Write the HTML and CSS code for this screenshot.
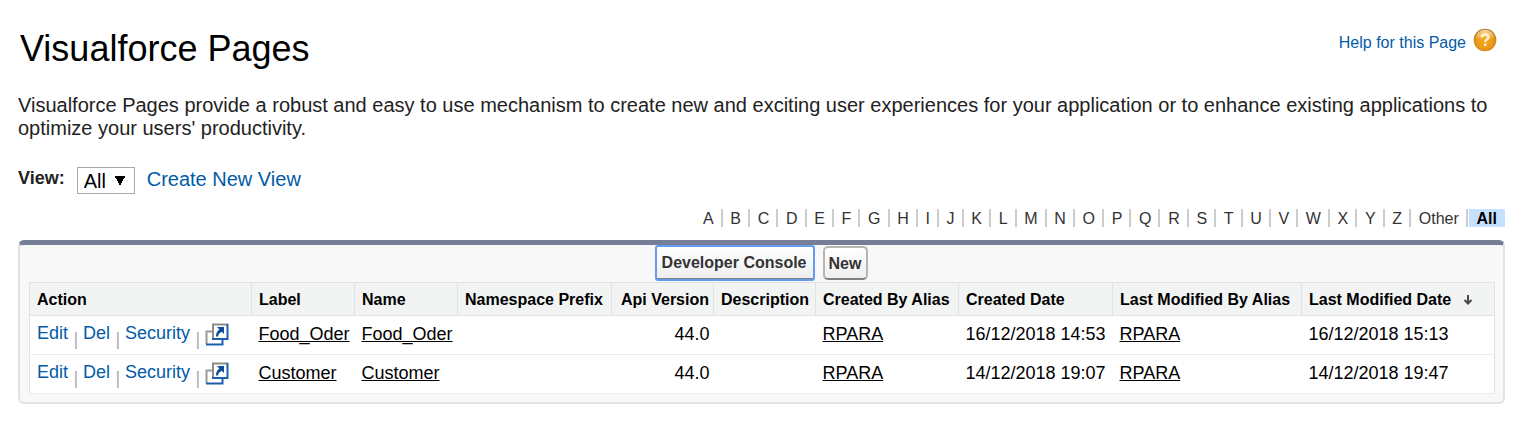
FILE: index.html
```html
<!DOCTYPE html>
<html lang="en">
<head>
<meta charset="utf-8">
<title>Visualforce Pages</title>
<link rel="stylesheet" href="styles.css">
</head>
<body>
<header class="page-head">
  <h1 class="title">Visualforce Pages</h1>
  <a class="help" href="#"><span>Help for this Page</span>
    <svg class="help-icon" width="24" height="24" viewBox="0 0 24 24" aria-hidden="true">
      <defs>
        <radialGradient id="orb" cx="50%" cy="52%" r="52%">
          <stop offset="0" stop-color="#f5a51c"/>
          <stop offset="0.7" stop-color="#ee9a16"/>
          <stop offset="0.88" stop-color="#d98c1c"/>
          <stop offset="1" stop-color="#9b6a28"/>
        </radialGradient>
        <linearGradient id="shine" x1="0" y1="0" x2="0" y2="1">
          <stop offset="0" stop-color="#fff" stop-opacity="0.6"/>
          <stop offset="1" stop-color="#fff" stop-opacity="0.1"/>
        </linearGradient>
      </defs>
      <circle cx="12" cy="12" r="11.3" fill="url(#orb)"/>
      <path d="M3 9.500C4 4 8 1.800 12 1.800S20 4 21 9.500C16 11.500 8 11.500 3 9.500Z" fill="url(#shine)"/>
      <path d="M8.500 9.300C8.700 7.200 10.200 6.500 12 6.500C14 6.500 15.500 7.600 15.500 9.300C15.500 11.600 12.200 11.600 12.200 14" fill="none" stroke="#fff4d8" stroke-width="2.300"/>
      <rect x="11" y="15.500" width="2.500" height="2.500" fill="#fff4d8"/>
    </svg>
  </a>
</header>

<p class="intro">Visualforce Pages provide a robust and easy to use mechanism to create new and exciting user experiences for your application or to enhance existing applications to optimize your users' productivity.</p>

<div class="view-bar">
  <label class="view-label" for="view">View:</label>
  <select class="view-select" id="view"><option>All</option></select>
  <a class="create" href="#">Create New View</a>
</div>

<nav class="rolodex" aria-label="Filter by letter">
  <a href="#">A</a><a href="#">B</a><a href="#">C</a><a href="#">D</a><a href="#">E</a><a href="#">F</a><a href="#">G</a><a href="#">H</a><a href="#">I</a><a href="#">J</a><a href="#">K</a><a href="#">L</a><a href="#">M</a><a href="#">N</a><a href="#">O</a><a href="#">P</a><a href="#">Q</a><a href="#">R</a><a href="#">S</a><a href="#">T</a><a href="#">U</a><a href="#">V</a><a href="#">W</a><a href="#">X</a><a href="#">Y</a><a href="#">Z</a><a href="#">Other</a><a class="current" href="#">All</a>
</nav>

<svg width="0" height="0" class="defs" aria-hidden="true">
  <symbol id="popout" viewBox="0 0 24 24">
    <path d="M7 8.500H1.500V21" fill="none" stroke="#9a9a9a" stroke-width="2"/>
    <path d="M1 21.500H17.500V16" fill="none" stroke="#1c5fae" stroke-width="2"/>
    <path d="M8 16.500V1.500H23" fill="none" stroke="#8d8d8d" stroke-width="2"/>
    <path d="M7 16H22.500V1" fill="none" stroke="#1c5fae" stroke-width="2"/>
    <path d="M12 4H19V11L16.800 8.800C14.500 10 13.500 11 13 13.500H11C11 10 12.300 8 14.400 6.400Z" fill="#0b4c9c"/>
  </symbol>
</svg>

<section class="panel">
  <div class="buttons">
    <button class="btn focused" type="button">Developer Console</button>
    <button class="btn" type="button">New</button>
  </div>
  <table class="list">
    <colgroup>
      <col class="c-action"><col class="c-name"><col class="c-name"><col class="c-wide"><col class="c-short"><col class="c-short"><col class="c-alias"><col class="c-wide"><col class="c-modified"><col>
    </colgroup>
    <thead>
      <tr>
        <th>Action</th><th>Label</th><th>Name</th><th>Namespace Prefix</th><th class="num">Api Version</th><th>Description</th><th>Created By Alias</th><th>Created Date</th><th>Last Modified By Alias</th>
        <th>Last Modified Date
          <svg class="sort" width="10" height="12" viewBox="0 0 10 12" aria-hidden="true"><path d="M5 1V10M1.500 6L5 9.500L8.500 6" fill="none" stroke="#4a4a4a" stroke-width="2"/></svg>
        </th>
      </tr>
    </thead>
    <tbody>
      <tr>
        <td><div class="actions"><a href="#">Edit</a><i></i><a href="#">Del</a><i></i><a href="#">Security</a><i></i><a class="pop" href="#" aria-label="Preview Food_Oder"><svg width="24" height="24"><use href="#popout"/></svg></a></div></td>
        <td><a href="#">Food_Oder</a></td><td><a href="#">Food_Oder</a></td><td></td><td class="num">44.0</td><td></td><td><a href="#">RPARA</a></td><td>16/12/2018 14:53</td><td><a href="#">RPARA</a></td><td>16/12/2018 15:13</td>
      </tr>
      <tr>
        <td><div class="actions"><a href="#">Edit</a><i></i><a href="#">Del</a><i></i><a href="#">Security</a><i></i><a class="pop" href="#" aria-label="Preview Customer"><svg width="24" height="24"><use href="#popout"/></svg></a></div></td>
        <td><a href="#">Customer</a></td><td><a href="#">Customer</a></td><td></td><td class="num">44.0</td><td></td><td><a href="#">RPARA</a></td><td>14/12/2018 19:07</td><td><a href="#">RPARA</a></td><td>14/12/2018 19:47</td>
      </tr>
    </tbody>
  </table>
</section>
</body>
</html>
```
FILE: styles.css
```css
* { box-sizing: border-box; }

body {
  margin: 0;
  padding: 28px 20px 20px 18px;
  background: #fff;
  color: #222;
  font-family: "Liberation Sans", Arial, sans-serif;
  font-size: 18px;
}

a { color: #015ba7; text-decoration: none; }

.page-head {
  display: flex;
  justify-content: space-between;
  align-items: flex-start;
}

.title {
  margin: 0;
  padding-left: 2px;
  color: #000;
  font-size: 36px;
  line-height: 42px;
  font-weight: normal;
}

.help {
  display: flex;
  align-items: center;
  gap: 7px;
  padding-right: 8px;
  font-size: 16px;
}

.help span { padding-top: 5px; }

.intro {
  margin: 24px 0 0;
  font-size: 20px;
  line-height: 23px;
}

.view-bar {
  display: flex;
  align-items: center;
  margin-top: 27px;
  font-size: 20px;
}

.view-label {
  padding-bottom: 4px;
  font-size: 18px;
  font-weight: bold;
}

.view-select {
  appearance: none;
  width: 58px;
  height: 27px;
  margin: 0 12px;
  padding: 0 6px;
  border: 1px solid #a9a9a9;
  border-radius: 0;
  background: #fff conic-gradient(from -28deg at 50% 100%, #000 56deg, transparent 0) no-repeat right 9px center / 10px 10px;
  color: #000;
  font: 20px "Liberation Sans", Arial, sans-serif;
}

.create { padding-bottom: 2px; }

.rolodex {
  display: flex;
  justify-content: space-between;
  width: 809px;
  margin: 15px 0 0 auto;
  font-size: 16px;
  line-height: 17px;
}

.rolodex a {
  padding: 1px 7px 0;
  border-right: 2px solid #ccc;
  color: #333;
}

.rolodex .current {
  padding: 1px 8px 0;
  border: 0;
  background: #c6e1ff;
  color: #000;
  font-weight: bold;
}

.defs { position: absolute; }

.panel {
  margin-top: 13px;
  padding: 0 8px 8px 9px;
  border: 2px solid #e0e3e5;
  border-top: 5px solid #747e96;
  border-radius: 6px;
  background: #f8f8f8;
}

.buttons {
  display: flex;
  justify-content: center;
  gap: 9px;
  padding: 1px 0 2px;
}

.btn {
  height: 34px;
  padding: 1px 5px 0 4px;
  border: 2px solid #b5b5b5;
  border-bottom-color: #7f7f7f;
  border-radius: 5px;
  background: linear-gradient(#fff, #eee);
  color: #333;
  font: bold 16px "Liberation Sans", Arial, sans-serif;
}

.focused {
  padding: 1px 6px 0 5px;
  border-width: 1px;
  border-bottom-width: 2px;
  border-radius: 2px;
  outline: 2px solid #659cf0;
  outline-offset: -1px;
}

.list {
  width: 100%;
  table-layout: fixed;
  border: 1px solid #e0e3e5;
  border-collapse: collapse;
  background: #fff;
  color: #000;
  white-space: nowrap;
}

.c-action { width: 222px; }
.c-name { width: 103px; }
.c-wide { width: 154px; }
.c-short { width: 102px; }
.c-alias { width: 143px; }
.c-modified { width: 189px; }

.list th {
  height: 33px;
  padding: 2px 0 0 7px;
  border: 1px solid #e0e3e5;
  background: #f2f3f3;
  font-size: 16px;
  text-align: left;
}

.list td {
  height: 39px;
  padding: 0 0 2px 7px;
  border-bottom: 1px solid #ececec;
}

.list td a { color: #000; text-decoration: underline; }
.list .num { padding-right: 4px; text-align: right; }

.list .actions {
  display: flex;
  align-items: center;
}

.list .actions a {
  padding-bottom: 2px;
  color: #015ba7;
  text-decoration: none;
}

.list .actions .pop { padding: 1px 0 0; }

.actions i {
  width: 2px;
  height: 17px;
  margin: 13px 6px 0 7px;
  border-left: 1px solid #ccb5a0;
  border-right: 1px solid #b4cbe8;
}

.actions svg { display: block; }
.sort { margin-left: 7px; vertical-align: -1px; }
```
